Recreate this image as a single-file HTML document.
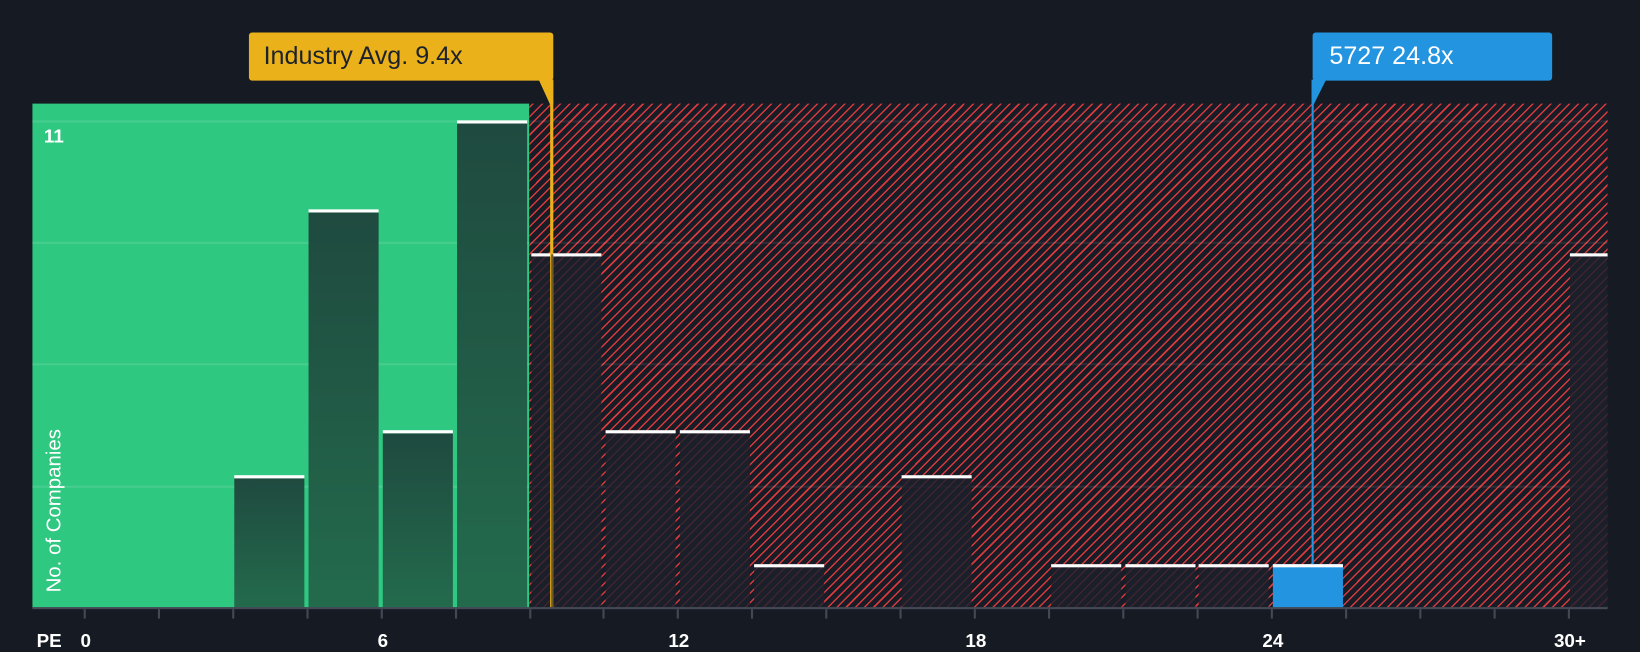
<!DOCTYPE html>
<html><head><meta charset="utf-8"><style>
html,body{margin:0;padding:0;background:#151a23;width:1640px;height:650px;overflow:hidden;}
#w{position:absolute;left:0;top:0;width:1568px;height:621px;transform:scale(1.04592,1.04670);transform-origin:0 0;font-family:"Liberation Sans",sans-serif;}
.a{position:absolute;}
.g{background:#2ec880;}
.r{background-color:#181c26;background-image:repeating-linear-gradient(-45deg,#d93a3c 0 1.4px,transparent 1.4px 6.2px);}
.gl{position:absolute;height:2px;}
.bg{position:absolute;background:linear-gradient(#1f4a3f,#236b4d);border-top:3px solid #fff;box-sizing:border-box;}
.br{position:absolute;background:rgba(28,32,44,0.82);border-top:3px solid #fff;box-sizing:border-box;}
.tk{position:absolute;top:582px;width:2px;height:9px;background:#444a55;}
.lb{position:absolute;top:602px;color:#fff;font-weight:bold;font-size:18px;transform:translateX(-50%);}
</style></head><body><div id="w">
<div class="a g" style="left:31px;top:99px;width:475px;height:482px"></div>
<div class="a r" style="left:506px;top:99px;width:1031px;height:482px"></div>
<div class="gl" style="left:31px;width:475px;top:115px;background:rgba(255,255,255,0.12)"></div>
<div class="gl" style="left:31px;width:475px;top:231px;background:rgba(255,255,255,0.12)"></div>
<div class="gl" style="left:31px;width:475px;top:347px;background:rgba(255,255,255,0.12)"></div>
<div class="gl" style="left:31px;width:475px;top:464px;background:rgba(255,255,255,0.12)"></div>
<div class="gl" style="left:506px;width:1031px;top:115px;background:rgba(255,255,255,0.08)"></div>
<div class="gl" style="left:506px;width:1031px;top:231px;background:rgba(255,255,255,0.08)"></div>
<div class="gl" style="left:506px;width:1031px;top:347px;background:rgba(255,255,255,0.08)"></div>
<div class="gl" style="left:506px;width:1031px;top:464px;background:rgba(255,255,255,0.08)"></div>

<div class="bg" style="left:224px;top:454px;width:67px;height:127px"></div>
<div class="bg" style="left:295px;top:200px;width:67px;height:381px"></div>
<div class="bg" style="left:366px;top:411px;width:67px;height:170px"></div>
<div class="bg" style="left:437px;top:115px;width:67px;height:466px"></div>
<div class="br" style="left:508px;top:242px;width:67px;height:339px"></div>
<div class="br" style="left:579px;top:411px;width:67px;height:170px"></div>
<div class="br" style="left:650px;top:411px;width:67px;height:170px"></div>
<div class="br" style="left:721px;top:539px;width:67px;height:42px"></div>
<div class="br" style="left:862px;top:454px;width:67px;height:127px"></div>
<div class="br" style="left:1005px;top:539px;width:67px;height:42px"></div>
<div class="br" style="left:1076px;top:539px;width:67px;height:42px"></div>
<div class="br" style="left:1146px;top:539px;width:67px;height:42px"></div>
<div class="a" style="left:1217px;top:539px;width:67px;height:42px;background:#2394e0;border-top:3px solid #fff;box-sizing:border-box"></div>
<div class="br" style="left:1501px;top:242px;width:36px;height:339px"></div>

<div class="a" style="left:526px;top:77px;width:3px;height:504px;background:#eab11a"></div>
<div class="a" style="left:527px;top:243px;width:2px;height:338px;background:#6b5a26"></div>
<div class="a" style="left:238px;top:31px;width:291px;height:46px;background:#eab11a;border-radius:3px"></div>
<svg class="a" style="left:510px;top:76px" width="20" height="24"><polygon points="5,0 19,0 19,24 16,24" fill="#eab11a"/></svg>
<div class="a" style="left:252px;top:40px;font-size:24px;color:#1c222c">Industry Avg. 9.4x</div>

<div class="a" style="left:1254px;top:77px;width:2px;height:462px;background:#2394e0"></div>
<div class="a" style="left:1255px;top:31px;width:229px;height:46px;background:#2394e0;border-radius:3px"></div>
<svg class="a" style="left:1254px;top:76px" width="16" height="24"><polygon points="0,0 14,0 2,24 0,24" fill="#2394e0"/></svg>
<div class="a" style="left:1271px;top:40px;font-size:24px;color:#fff">5727 24.8x</div>

<div class="a" style="left:42px;top:120px;font-size:18px;font-weight:bold;color:#fff">11</div>
<div class="a" style="left:41px;top:566px;font-size:19.5px;color:#fff;transform:rotate(-90deg);transform-origin:0 0;white-space:nowrap;line-height:22px">No. of Companies</div>

<div class="a" style="left:31px;top:580px;width:1506px;height:2px;background:#444a55"></div>
<div class="tk" style="left:80px"></div><div class="tk" style="left:151px"></div><div class="tk" style="left:222px"></div><div class="tk" style="left:293px"></div><div class="tk" style="left:364px"></div><div class="tk" style="left:435px"></div><div class="tk" style="left:506px"></div><div class="tk" style="left:576px"></div><div class="tk" style="left:647px"></div><div class="tk" style="left:718px"></div><div class="tk" style="left:789px"></div><div class="tk" style="left:860px"></div><div class="tk" style="left:931px"></div><div class="tk" style="left:1002px"></div><div class="tk" style="left:1073px"></div><div class="tk" style="left:1144px"></div><div class="tk" style="left:1215px"></div><div class="tk" style="left:1286px"></div><div class="tk" style="left:1357px"></div><div class="tk" style="left:1428px"></div><div class="tk" style="left:1499px"></div>

<div class="a" style="left:35px;top:602px;color:#fff;font-weight:bold;font-size:18px">PE</div>
<div class="lb" style="left:82px">0</div>
<div class="lb" style="left:366px">6</div>
<div class="lb" style="left:649px">12</div>
<div class="lb" style="left:933px">18</div>
<div class="lb" style="left:1217px">24</div>
<div class="lb" style="left:1501px">30+</div>
</div></body></html>
